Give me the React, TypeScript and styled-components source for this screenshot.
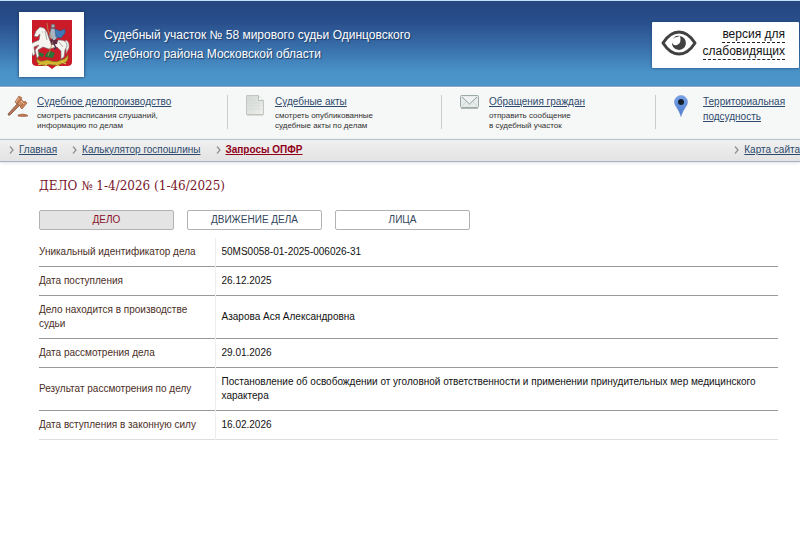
import React from 'react';
import styled, { createGlobalStyle } from 'styled-components';

const GlobalStyle = createGlobalStyle`
  * { box-sizing: border-box; }
  body {
    margin: 0;
    background: #fff;
    color: #111;
    font-family: "Liberation Sans", Arial, sans-serif;
    font-size: 10px;
    overflow-x: hidden;
  }
  a { color: #2d4a6c; text-decoration: underline; }
`;

const Header = styled.header`
  display: flex;
  align-items: center;
  gap: 20px;
  height: 87px;
  padding: 2px 1px 0 19px;
  border-top: 1px solid #bfe2f7;
  border-bottom: 1px solid #8ba4c4;
  background: linear-gradient(#25467f 0%, #294f8c 25%, #3b75af 60%, #4992c7 82%, #4c96ca 100%);
`;

const Crest = styled.a`
  display: flex;
  align-items: center;
  justify-content: center;
  width: 65px;
  height: 65px;
  background: #fff;
  box-shadow: 0 0 3px #17335f;
`;

const CourtName = styled.h1`
  flex: 1;
  max-width: 330px;
  margin: 0;
  color: #fff;
  font-size: 12px;
  font-weight: 400;
  line-height: 19px;
  text-shadow: 1px 1px 1px #1c3a67;
`;

const VisionButton = styled.button`
  display: flex;
  align-items: center;
  justify-content: space-between;
  width: 147px;
  height: 46px;
  margin-left: auto;
  padding: 0 14px 4px 9px;
  border: 0;
  border-radius: 1px;
  background: #fff;
  box-shadow: 0 0 3px #1f4274;
  color: #111;
  font: 12px "Liberation Sans", Arial, sans-serif;
  text-align: right;
`;

const VisionLine = styled.span`
  display: block;
  width: fit-content;
  height: 17px;
  margin-left: auto;
  border-bottom: 1px dashed #222;
  line-height: 16px;
`;

const Services = styled.nav`
  display: grid;
  grid-template-columns: 227fr 214fr 214fr 145fr;
  height: 52px;
  padding-top: 7px;
  border-top: 1px solid #fff;
  background: #f6f7f7;
`;

const Service = styled.div<{ $first?: boolean }>`
  display: grid;
  grid-template-columns: 20px 1fr;
  align-items: start;
  column-gap: ${p => (p.$first ? 10 : 9)}px;
  height: 34px;
  padding-left: ${p => (p.$first ? 7 : 18)}px;
  border-left: ${p => (p.$first ? 0 : 1)}px solid #ccc;
`;

const ServiceLink = styled.a`
  display: block;
  margin-top: -1px;
  font-size: 10px;
  line-height: 15px;
`;

const ServiceNote = styled.p`
  margin: 2px 0 0;
  color: #333;
  font-size: 8px;
  line-height: 10px;
  white-space: nowrap;
`;

const Crumbs = styled.nav`
  display: flex;
  gap: 15px;
  height: 23px;
  padding-left: 9px;
  border-top: 1px solid #b4c2d0;
  border-bottom: 1px solid #aab2c4;
  background: linear-gradient(#f0f0f0, #e3e3e3);
  box-shadow: 0 1px 3px #dce0e8;
  font-size: 10px;
  line-height: 18px;
  overflow: hidden;
`;

const Crumb = styled.span<{ $active?: boolean; $last?: boolean }>`
  display: flex;
  align-items: center;
  gap: 5px;
  height: 19px;
  white-space: nowrap;
  margin-left: ${p => (p.$last ? 'auto' : 0)};
  a {
    color: ${p => (p.$active ? '#900019' : '#2d4a6c')};
    font-weight: ${p => (p.$active ? 700 : 400)};
  }
`;

const Main = styled.main`
  padding: 16px 22px 20px 39px;
`;

const CaseTitle = styled.h2`
  margin: 0 0 16px;
  color: #78142a;
  font: 400 12px/16px Georgia, "DejaVu Serif", serif;
`;

const Tabs = styled.div`
  display: flex;
  gap: 13px;
`;

const Tab = styled.button<{ $active?: boolean }>`
  width: 135px;
  height: 20px;
  padding: 0;
  border: 1px solid #b0b2b4;
  border-radius: 2px;
  background: ${p => (p.$active ? '#e4e4e4' : '#fff')};
  color: ${p => (p.$active ? '#8a1228' : '#33465c')};
  font: 10px/18px "Liberation Sans", Arial, sans-serif;
`;

const CaseTable = styled.table`
  width: 100%;
  margin-top: 8px;
  border-collapse: collapse;
  table-layout: fixed;
  line-height: 14px;
  tr { border-bottom: 1px solid #999; }
  tr:last-child { border-bottom-color: #ddd; }
  th, td { padding: 7px 0; text-align: left; vertical-align: middle; }
  th {
    width: 176px;
    padding-right: 8px;
    border-right: 1px solid #eee;
    color: #4b2e25;
    font-weight: 400;
  }
  td { padding-left: 6px; }
`;

const CrestIcon = () => (
  <svg width="40" height="49" viewBox="0 0 40 49" aria-hidden="true">
    <path d="M0 0h40v42q0 4-5 4H24l-4 3-4-3H5q-5 0-5-4z" fill="#cb1a28" />
    <path d="M5 37q1 5 6 4 5-2 8 0 6 2 10-1 4 0 7-5 1 7-5 8-4 3-10 2-5-1-7 0-6 1-9-3z" fill="#d5b630" stroke="#75751f" strokeWidth=".7" />
    <path d="M13 37q1-5 5-6l5 2-2 5zM7 32l5 2-1 3-5-1z" fill="#2b7438" />
    <path d="M9 44l-3 1M15 44l-2 2M24 44l3 2M30 42l4 2" stroke="#dfc34d" strokeWidth="1.3" />
    <path d="M34 20q4 2 3 8l-3 6q1-7-3-10z" fill="#efeeea" stroke="#77676a" strokeWidth=".5" />
    <path d="M12 8l3 4 3 9 10-1q7 0 7 6l-2 4-1 7-3 2 0-8-4-4-8 2-6-2-5 3 1 6-2 2-2-8 4-5-5 2 1 7-2 2-3-8 2-5 7-3 1-6-3 3-3-1 2-5 4-4z" fill="#f5f4ef" stroke="#716c74" strokeWidth=".6" />
    <path d="M13 11l2 9m-5-8h1M27 22l4 5" stroke="#8b8a90" strokeWidth=".7" />
    <path d="M19 8l5 1 2 8-4 4-5-4z" fill="#aab5c1" stroke="#46505d" strokeWidth=".6" />
    <path d="M23 9l5 2 5-2v4l-4 5-5-1z" fill="#3f79ba" stroke="#28547f" strokeWidth=".6" />
    <circle cx="21" cy="6" r="2" fill="#a4aab1" stroke="#555" strokeWidth=".6" />
    <path d="M18 20l8 0-1 4-6 1z" fill="#642a43" />
    <path d="M15 3l1 7 5 11-5 15" fill="none" stroke="#b58f50" strokeWidth=".8" />
    <path d="M20 19l2 5 2 4-2 1" fill="none" stroke="#53354d" strokeWidth="1.4" />
  </svg>
);

const EyeIcon = () => (
  <svg width="36" height="26" viewBox="0 0 36 26" aria-hidden="true">
    <path d="M2 13Q9 2 18 2t16 11q-7 11-16 11T2 13z" fill="#fff" stroke="#414141" strokeWidth="3" strokeLinejoin="round" />
    <path d="M19 6a7 7 0 1 1-8 6q1 4 5 3 5-2 3-9z" fill="#414141" />
    <path d="M12 9q2-4 7-3l-3 1q-3 0-4 2z" fill="#414141" />
  </svg>
);

const GavelIcon = () => (
  <svg width="22" height="23" viewBox="0 0 22 23" aria-hidden="true">
    <path d="M11 8l2 2L3 20q-2 1-2-1z" fill="#b67858" stroke="#744832" strokeWidth=".7" />
    <path d="M13 3l5 5-4 4-5-5z" fill="#cf9068" stroke="#885137" strokeWidth=".6" />
    <path d="M12 1l3 2-5 6-2-2zM18 6l2 2-5 6-2-2z" fill="#c98255" stroke="#885137" strokeWidth=".6" />
    <path d="M12 3L9 7m5-1l3 3" stroke="#edbd97" />
    <path d="M11 20q5-2 9 0l1 1q-5 1-10 0z" fill="#c77c55" stroke="#8d5940" strokeWidth=".6" />
  </svg>
);

const PaperIcon = () => (
  <svg width="18" height="21" viewBox="0 0 18 21" aria-hidden="true">
    <defs><linearGradient id="paper" x2="1" y2="1"><stop stopColor="#d2d7d5" /><stop offset="1" stopColor="#eeefec" /></linearGradient></defs>
    <path d="M.5.5h12l5 5v14H.5z" fill="url(#paper)" stroke="#c1c6c1" />
    <path d="M12.5.5v5h5" fill="#f9faf8" stroke="#b8beb9" />
    <path d="M3 5h7M3 8h11M3 11h11M3 14h11" stroke="#d3d8d3" strokeWidth=".7" />
    <path d="M1 20h16" stroke="#c0c0bc" />
  </svg>
);

const MailIcon = () => (
  <svg width="19" height="14" viewBox="0 0 19 14" aria-hidden="true">
    <rect x=".5" y=".5" width="18" height="12" rx="1" fill="#e5ebea" stroke="#9aa8a6" />
    <path d="M2 11l5-5m10 5l-5-5" stroke="#d2d8d7" />
    <path d="M2 2l7.5 7L17 2" fill="#f0f3f2" stroke="#8d9c9b" />
    <path d="M1 13.5h17" stroke="#b1b8b4" />
  </svg>
);

const PinIcon = () => (
  <svg width="14" height="22" viewBox="0 0 14 22" aria-hidden="true">
    <defs><linearGradient id="pin" x2="0" y2="1"><stop stopColor="#77a2e8" /><stop offset="1" stopColor="#4d7acd" /></linearGradient></defs>
    <path d="M7 .5a6.5 6.5 0 0 1 6.5 6.5C13.5 11 9 14 7 21.5 5 14 .5 11 .5 7A6.5 6.5 0 0 1 7 .5z" fill="url(#pin)" stroke="#7294cf" strokeWidth=".6" />
    <circle cx="7" cy="7" r="3" fill="#16202c" />
  </svg>
);

const Chevron = () => (
  <svg width="5" height="8" viewBox="0 0 5 8" aria-hidden="true">
    <path d="M1 .5L4 4 1 7.5" fill="none" stroke="#929292" strokeWidth="1.3" />
  </svg>
);

const services = [
  { title: 'Судебное делопроизводство', note: ['смотреть расписания слушаний,', 'информацию по делам'], icon: <GavelIcon /> },
  { title: 'Судебные акты', note: ['смотреть опубликованные', 'судебные акты по делам'], icon: <PaperIcon /> },
  { title: 'Обращения граждан', note: ['отправить сообщение', 'в судебный участок'], icon: <MailIcon /> },
  { title: 'Территориальная подсудность', note: [], icon: <PinIcon /> },
];

const rows = [
  ['Уникальный идентификатор дела', '50MS0058-01-2025-006026-31'],
  ['Дата поступления', '26.12.2025'],
  ['Дело находится в производстве судьи', 'Азарова Ася Александровна'],
  ['Дата рассмотрения дела', '29.01.2026'],
  ['Результат рассмотрения по делу', 'Постановление об освобождении от уголовной ответственности и применении принудительных мер медицинского характера'],
  ['Дата вступления в законную силу', '16.02.2026'],
];

export default function App() {
  return (
    <>
      <GlobalStyle />
      <Header>
        <Crest href="#" aria-label="Главная"><CrestIcon /></Crest>
        <CourtName>Судебный участок № 58 мирового судьи Одинцовского судебного района Московской области</CourtName>
        <VisionButton type="button">
          <EyeIcon />
          <span>
            <VisionLine>версия для</VisionLine>
            <VisionLine>слабовидящих</VisionLine>
          </span>
        </VisionButton>
      </Header>
      <Services>
        {services.map((s, i) => (
          <Service key={s.title} $first={i === 0}>
            {s.icon}
            <div>
              <ServiceLink href="#">{s.title}</ServiceLink>
              {s.note.length > 0 && <ServiceNote>{s.note[0]}<br />{s.note[1]}</ServiceNote>}
            </div>
          </Service>
        ))}
      </Services>
      <Crumbs>
        <Crumb><Chevron /><a href="#">Главная</a></Crumb>
        <Crumb><Chevron /><a href="#">Калькулятор госпошлины</a></Crumb>
        <Crumb $active><Chevron /><a href="#">Запросы ОПФР</a></Crumb>
        <Crumb $last><Chevron /><a href="#">Карта сайта</a></Crumb>
      </Crumbs>
      <Main>
        <CaseTitle>ДЕЛО № 1-4/2026 (1-46/2025)</CaseTitle>
        <Tabs>
          <Tab type="button" $active>ДЕЛО</Tab>
          <Tab type="button">ДВИЖЕНИЕ ДЕЛА</Tab>
          <Tab type="button">ЛИЦА</Tab>
        </Tabs>
        <CaseTable>
          <tbody>
            {rows.map(([name, value]) => (
              <tr key={name}><th scope="row">{name}</th><td>{value}</td></tr>
            ))}
          </tbody>
        </CaseTable>
      </Main>
    </>
  );
}
